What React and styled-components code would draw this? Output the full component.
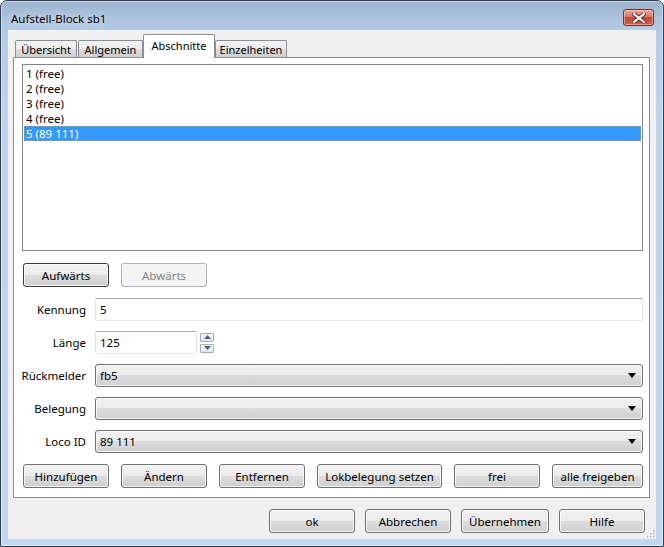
import React from "react";
import styled, { createGlobalStyle, css } from "styled-components";

const GlobalStyle = createGlobalStyle`
  html, body {
    margin: 0;
    padding: 0;
    background: #ffffff;
  }
  body {
    font-family: "Noto Sans", "DejaVu Sans", sans-serif;
    font-size: 11.5px;
    color: #000;
  }
  * { box-sizing: border-box; }
`;

const sections = ["1 (free)", "2 (free)", "3 (free)", "4 (free)", "5 (89 111)"];
const tabs = ["Übersicht", "Allgemein", "Abschnitte", "Einzelheiten"];
const tabWidths = [62, 65, 72, 72];

export default function App() {
  return (
    <>
      <GlobalStyle />
      <Window>
        <TitleBar>
          <Title>Aufstell-Block sb1</Title>
          <CloseButton>
            <svg width="14" height="10" viewBox="0 0 14 10">
              <path d="M2 1 L12 9 M12 1 L2 9" stroke="#5b2a22" strokeWidth="4" strokeLinecap="square" />
              <path d="M2 1 L12 9 M12 1 L2 9" stroke="#ffffff" strokeWidth="2.2" strokeLinecap="square" />
            </svg>
          </CloseButton>
        </TitleBar>
        <Client>
          <TabStrip>
            {tabs.map((t, i) => (
              <Tab key={t} $active={i === 2} style={{ width: tabWidths[i] }}>
                {t}
              </Tab>
            ))}
          </TabStrip>
          <TabPanel>
            <ListBox>
              {sections.map((s, i) => (
                <ListRow key={s} $selected={i === 4}>
                  {s}
                </ListRow>
              ))}
            </ListBox>

            <ButtonRow>
              <Button $focused>Aufwärts</Button>
              <Button disabled>Abwärts</Button>
            </ButtonRow>

            <Form>
              <Label>Kennung</Label>
              <TextField>5</TextField>

              <Label>Länge</Label>
              <SpinRow>
                <TextField $width={102}>125</TextField>
                <Spinner>
                  <SpinButton>
                    <svg width="7" height="4" viewBox="0 0 7 4">
                      <path d="M0 4 L3.5 0 L7 4 Z" fill="#4b5f86" />
                    </svg>
                  </SpinButton>
                  <SpinButton>
                    <svg width="7" height="4" viewBox="0 0 7 4">
                      <path d="M0 0 L7 0 L3.5 4 Z" fill="#4b5f86" />
                    </svg>
                  </SpinButton>
                </Spinner>
              </SpinRow>

              <Label>Rückmelder</Label>
              <Combo>
                <span>fb5</span>
                <Arrow />
              </Combo>

              <Label>Belegung</Label>
              <Combo>
                <span />
                <Arrow />
              </Combo>

              <Label>Loco ID</Label>
              <Combo>
                <span>89 111</span>
                <Arrow />
              </Combo>
            </Form>

            <ButtonRow $spread>
              <Button>Hinzufügen</Button>
              <Button>Ändern</Button>
              <Button>Entfernen</Button>
              <Button $width={125}>Lokbelegung setzen</Button>
              <Button>frei</Button>
              <Button $width={91}>alle freigeben</Button>
            </ButtonRow>
          </TabPanel>

          <Footer>
            <Button>ok</Button>
            <Button>Abbrechen</Button>
            <Button $width={88}>Übernehmen</Button>
            <Button>Hilfe</Button>
            <Grip>
              <svg width="9" height="9" viewBox="0 0 9 9">
                {[
                  [7, 1],
                  [7, 4],
                  [4, 4],
                  [7, 7],
                  [4, 7],
                  [1, 7],
                ].map(([x, y]) => (
                  <rect key={`${x}-${y}`} x={x} y={y} width="1.5" height="1.5" fill="#b3b8c4" />
                ))}
              </svg>
            </Grip>
          </Footer>
        </Client>
      </Window>
    </>
  );
}

const Arrow = () => (
  <svg width="8" height="5" viewBox="0 0 8 5">
    <path d="M0 0 L8 0 L4 5 Z" fill="#000" />
  </svg>
);

const Window = styled.div`
  width: 664px;
  height: 547px;
  border: 1px solid #2e3d52;
  border-radius: 7px 7px 0 0;
  background: linear-gradient(180deg, #9db4cf 0px, #b4cbe4 28px, #bfd5ec 120px, #c3d8ef 100%);
  box-shadow: inset 0 0 0 1px rgba(255, 255, 255, 0.45);
  padding: 0 7px 7px 7px;
  display: flex;
  flex-direction: column;
`;

const TitleBar = styled.div`
  height: 29px;
  display: flex;
  align-items: center;
  justify-content: space-between;
  padding-left: 3px;
  padding-right: 2px;
`;

const Title = styled.div`
  font-size: 11.5px;
  color: #000;
  padding-top: 5px;
  text-shadow: 0 0 6px rgba(255, 255, 255, 0.9);
`;

const CloseButton = styled.div`
  width: 31px;
  height: 17px;
  margin-top: 4px;
  border: 1px solid #7a2d22;
  border-radius: 3px;
  background: linear-gradient(180deg, #e9a99b 0%, #d47a68 45%, #c24a35 50%, #c9624c 100%);
  box-shadow: inset 0 0 0 1px rgba(255, 220, 210, 0.5);
  display: flex;
  align-items: center;
  justify-content: center;
`;

const Client = styled.div`
  flex: 1;
  background: #f0f0f0;
  padding: 5px 6px 0 5px;
  display: flex;
  flex-direction: column;
  position: relative;
`;

const TabStrip = styled.div`
  height: 22px;
  display: flex;
  align-items: flex-end;
  padding-left: 2px;
  position: relative;
  z-index: 1;
`;

const Tab = styled.div`
  display: flex;
  align-items: center;
  justify-content: center;
  font-size: 11px;
  border: 1px solid #898c95;
  border-bottom: none;
  border-radius: 2px 2px 0 0;
  margin-right: 1px;
  white-space: nowrap;
  ${(p) =>
    p.$active
      ? css`
          height: 24px;
          margin-bottom: -1px;
          margin-left: -1px;
          margin-right: 0;
          background: #ffffff;
          padding-bottom: 3px;
        `
      : css`
          height: 17px;
          background: linear-gradient(180deg, #f2f2f2 0%, #ebebeb 50%, #dddddd 51%, #cfcfcf 100%);
        `}
`;

const TabPanel = styled.div`
  height: 441px;
  border: 1px solid #898c95;
  background: #ffffff;
  padding: 6px 6px 9px 8px;
  display: flex;
  flex-direction: column;
`;

const ListBox = styled.div`
  height: 187px;
  border: 1px solid #828790;
  background: #ffffff;
  padding: 1px;
`;

const ListRow = styled.div`
  height: 15px;
  line-height: 15px;
  padding-left: 2px;
  white-space: nowrap;
  ${(p) =>
    p.$selected &&
    css`
      background: #3399ff;
      color: #ffffff;
      outline: 1px dotted rgba(214, 150, 90, 0.55);
      outline-offset: -1px;
    `}
`;

const ButtonRow = styled.div`
  display: flex;
  gap: 12px;
  margin-top: ${(p) => (p.$spread ? "11px" : "12px")};
  padding-left: 1px;
  justify-content: ${(p) => (p.$spread ? "space-between" : "flex-start")};
`;

const Button = styled.button`
  width: ${(p) => p.$width || 86}px;
  height: 24px;
  padding: 0;
  font-family: inherit;
  font-size: 11.5px;
  color: #000;
  border: 1px solid ${(p) => (p.$focused ? "#3c3c3c" : "#707070")};
  border-radius: 3px;
  background: linear-gradient(180deg, #f2f2f2 0%, #ebebeb 49%, #dddddd 50%, #cfcfcf 100%);
  box-shadow: inset 0 0 0 1px rgba(252, 252, 252, 0.8);
  white-space: nowrap;
  flex: none;

  &:disabled {
    color: #838383;
    border-color: #adb2b5;
    background: #f4f4f4;
    box-shadow: none;
  }
`;

const Form = styled.div`
  display: grid;
  grid-template-columns: 64px 1fr;
  grid-auto-rows: 23px;
  column-gap: 9px;
  row-gap: 10px;
  margin-top: 11px;
`;

const Label = styled.div`
  display: flex;
  align-items: center;
  justify-content: flex-end;
  white-space: nowrap;
`;

const TextField = styled.div`
  width: ${(p) => (p.$width ? `${p.$width}px` : "100%")};
  height: 23px;
  display: flex;
  align-items: center;
  padding-left: 4px;
  background: #ffffff;
  border: 1px solid #e2e3ea;
  border-top-color: #abadb3;
  border-bottom-color: #e3e9ef;
  border-radius: 2px;
`;

const SpinRow = styled.div`
  display: flex;
  align-items: center;
  gap: 3px;
`;

const Spinner = styled.div`
  display: flex;
  flex-direction: column;
  gap: 2px;
`;

const SpinButton = styled.div`
  width: 14px;
  height: 9px;
  display: flex;
  align-items: center;
  justify-content: center;
  border: 1px solid #a5acb5;
  border-radius: 1px;
  background: linear-gradient(180deg, #f5f6f8 0%, #e3e6eb 100%);
`;

const Combo = styled.div`
  height: 23px;
  display: flex;
  align-items: center;
  justify-content: space-between;
  padding: 0 6px 0 4px;
  border: 1px solid #707070;
  border-radius: 3px;
  background: linear-gradient(180deg, #f2f2f2 0%, #ebebeb 49%, #dddddd 50%, #cfcfcf 100%);
  box-shadow: inset 0 0 0 1px rgba(252, 252, 252, 0.8);
`;

const Footer = styled.div`
  display: flex;
  justify-content: flex-end;
  gap: 10px;
  margin-top: 11px;
  padding-right: 5px;
`;

const Grip = styled.div`
  position: absolute;
  right: 1px;
  bottom: 1px;
  width: 9px;
  height: 9px;
  line-height: 0;
`;
